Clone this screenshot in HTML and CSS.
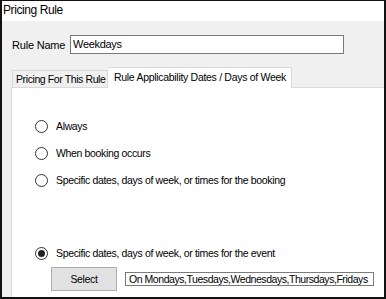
FILE: index.html
```html
<!DOCTYPE html>
<html>
<head>
<meta charset="utf-8">
<link rel="stylesheet" href="styles.css">
</head>
<body>
<div class="window">
  <div class="titlebar">Pricing Rule</div>
  <div class="content">
    <div class="name-row">
      <span class="label">Rule Name</span>
      <div class="textbox name-box">Weekdays</div>
    </div>
    <div class="tabs">
      <div class="tab">Pricing For This Rule</div>
      <div class="tab active">Rule Applicability Dates / Days of Week</div>
    </div>
    <div class="panel">
      <div class="options">
        <div class="radio-row"><span class="radio"></span><span>Always</span></div>
        <div class="radio-row"><span class="radio"></span><span>When booking occurs</span></div>
        <div class="radio-row"><span class="radio"></span><span>Specific dates, days of week, or times for the booking</span></div>
      </div>
      <div class="radio-row event"><span class="radio checked"></span><span>Specific dates, days of week, or times for the event</span></div>
      <div class="select-row">
        <div class="button">Select</div>
        <div class="textbox days-box">On Mondays,Tuesdays,Wednesdays,Thursdays,Fridays</div>
      </div>
    </div>
  </div>
</div>
</body>
</html>
```

FILE: styles.css
```css
html, body {
  margin: 0;
  padding: 0;
  background: #ffffff;
}
body {
  font-family: "Liberation Sans", Arial, sans-serif;
  font-size: 10.5px;
  letter-spacing: -0.35px;
  color: #000;
}
.window {
  width: 386px;
  height: 299px;
  box-sizing: border-box;
  border-top: 1px solid #111;
  border-left: 2px solid #111;
  border-right: 2px solid #111;
  border-bottom: 2px solid #111;
  background: #f0f0f0;
  display: flex;
  flex-direction: column;
  overflow: hidden;
}
.titlebar {
  background: #fff;
  height: 20px;
  line-height: 18px;
  padding-left: 1px;
  font-size: 12px;
  letter-spacing: -0.4px;
  flex: none;
}
.content {
  flex: 1;
  display: flex;
  flex-direction: column;
  padding-left: 9px;
  min-height: 0;
}
.name-row {
  display: flex;
  align-items: center;
  margin-top: 14px;
  height: 19px;
}
.label {
  width: 58px;
  padding-left: 1px;
  white-space: nowrap;
  font-size: 11px;
  letter-spacing: -0.2px;
}
.textbox {
  background: #fff;
  border: 1px solid #7a7a7a;
  box-sizing: border-box;
  white-space: nowrap;
}
.name-box {
  width: 274px;
  height: 19px;
  line-height: 17px;
  padding-left: 2px;
  font-size: 11px;
  letter-spacing: -0.3px;
}
.tabs {
  display: flex;
  align-items: flex-end;
  margin-top: 13px;
  height: 20px;
  position: relative;
  z-index: 1;
  padding-left: 1px;
}
.tab {
  height: 17px;
  line-height: 16px;
  box-sizing: border-box;
  border: 1px solid #d9d9d9;
  border-bottom: none;
  padding: 0 3px;
  background: #f0f0f0;
  width: 96px;
  white-space: nowrap;
  letter-spacing: -0.4px;
}
.tab.active {
  background: #fff;
  height: 21px;
  margin-bottom: -1px;
  line-height: 19px;
  width: 184px;
  padding-left: 6px;
  border-left: none;
  letter-spacing: -0.3px;
}
.panel {
  flex: 1;
  background: #fff;
  border-top: 1px solid #d9d9d9;
  border-left: 1px solid #d9d9d9;
  padding-left: 23px;
  padding-top: 31px;
  display: flex;
  flex-direction: column;
}
.options {
  display: flex;
  flex-direction: column;
  gap: 13px;
}
.radio-row {
  display: flex;
  align-items: center;
  height: 14px;
  white-space: nowrap;
}
.radio {
  width: 11px;
  height: 11px;
  border: 1px solid #333;
  border-radius: 50%;
  background: #fff;
  margin-right: 8px;
  display: flex;
  align-items: center;
  justify-content: center;
  flex: none;
}
.radio.checked::after {
  content: "";
  width: 7px;
  height: 7px;
  border-radius: 50%;
  background: #222;
}
.event {
  margin-top: 59px;
}
.select-row {
  display: flex;
  align-items: center;
  margin-top: 7px;
  margin-left: 16px;
  gap: 8px;
}
.button {
  width: 66px;
  height: 24px;
  box-sizing: border-box;
  background: #e1e1e1;
  border: 1px solid #adadad;
  text-align: center;
  line-height: 22px;
}
.days-box {
  width: 249px;
  height: 14px;
  line-height: 12px;
  padding-left: 3px;
  letter-spacing: -0.45px;
  overflow: hidden;
}
```
